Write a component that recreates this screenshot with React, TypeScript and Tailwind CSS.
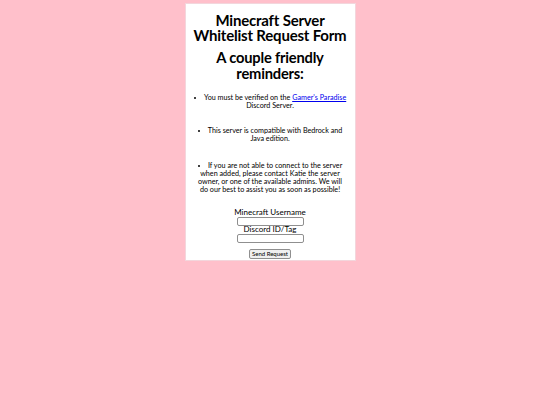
import React from "react";

export default function App() {
  return (
    <div className="min-h-[405px] w-full bg-[#ffc0cb] pt-[3px]" style={{ fontFamily: 'Lato, sans-serif' }}>
      <div className="mx-auto w-[171px] border border-[#f3d6dc] bg-white px-[7px] pb-[1px] text-center text-black">
        <h1 className="mt-[9px] text-[15px] font-bold leading-[14.5px] tracking-[-0.2px]">
          Minecraft Server Whitelist Request Form
        </h1>
        <h2 className="mt-[8px] text-[14.7px] font-bold leading-[15.5px] tracking-[-0.2px]">
          A couple friendly reminders:
        </h2>
        <ul className="mx-auto mt-[13px] w-[154px] list-inside list-disc text-[7.2px] leading-[8px]">
          <li>
            You must be verified on the{" "}
            <a href="#" className="text-[#0000ee] underline">
              Gamer's Paradise
            </a>{" "}
            Discord Server.
          </li>
          <li className="mt-[17px]">This server is compatible with Bedrock and Java edition.</li>
          <li className="mx-auto mt-[19px] w-[149px]">
            If you are not able to connect to the server when added, please contact Katie the server owner, or one of the
            available admins. We will do our best to assist you as soon as possible!
          </li>
        </ul>
        <form className="mt-[14px] flex flex-col items-center text-[8px] leading-[9px]">
          <label className="block">Minecraft Username</label>
          <input className="h-[9px] w-[67px] border border-[#8f8f8f] rounded-[2px] bg-white" />
          <label className="block mt-[-1px]">Discord ID/Tag</label>
          <input className="h-[9px] w-[67px] border border-[#8f8f8f] rounded-[2px] bg-white" />
          <button
            type="button"
            className="mt-[6px] mb-[0px] h-[10px] rounded-[2px] border border-[#8f8f8f] bg-[#efefef] px-[2px] text-[6px] leading-[8px]"
          >
            Send Request
          </button>
        </form>
      </div>
    </div>
  );
}
